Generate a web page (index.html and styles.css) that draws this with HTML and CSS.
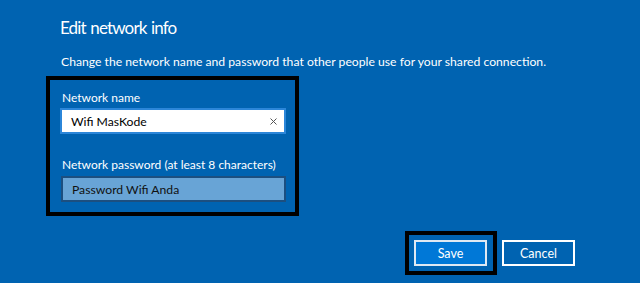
FILE: index.html
```html
<!DOCTYPE html>
<html lang="en">
<head>
<meta charset="utf-8">
<title>Edit network info</title>
<link rel="stylesheet" href="styles.css">
</head>
<body>
<main class="dialog">
  <h1 class="title">Edit network info</h1>
  <p class="desc">Change the network name and password that other people use for your shared connection.</p>
  <section class="fields">
    <div class="label">Network name</div>
    <div class="input input-name">
      <span class="value">Wifi MasKode</span>
      <svg class="clear" width="7" height="7" viewBox="0 0 7 7"><path d="M0.5 0.5L6.5 6.5M6.5 0.5L0.5 6.5" stroke="#555" stroke-width="1" fill="none"/></svg>
    </div>
    <div class="label label-pw">Network password (at least 8 characters)</div>
    <div class="input input-pw">
      <span class="value">Password Wifi Anda</span>
    </div>
  </section>
  <div class="actions">
    <div class="focus-ring"><button class="btn btn-primary">Save</button></div>
    <button class="btn btn-secondary">Cancel</button>
  </div>
</main>
</body>
</html>
```
FILE: styles.css
```css
html, body {
  margin: 0;
  padding: 0;
}
body {
  background: #0063b1;
  width: 640px;
  height: 283px;
  overflow: hidden;
  font-family: "Lato", "Open Sans", sans-serif;
  color: #fff;
}
.dialog {
  padding: 15px 0 0 46px;
  display: flex;
  flex-direction: column;
}
.title {
  margin: 0 0 0 14px;
  font-size: 17px;
  font-weight: 400;
  line-height: 26px;
  letter-spacing: -0.85px;
  word-spacing: 1px;
}
.desc {
  margin: 13px 0 0 15px;
  font-size: 12.2px;
  line-height: 16px;
}
.fields {
  margin-top: 6px;
  width: 253px;
  box-sizing: border-box;
  border: 4px solid #000;
  padding: 10px 9px 10px 10px;
  display: flex;
  flex-direction: column;
}
.label {
  font-size: 12px;
  line-height: 16px;
  margin-left: 2px;
}
.label-pw {
  margin-top: 23px;
}
.input {
  margin-top: 2px;
  height: 26px;
  box-sizing: border-box;
  display: flex;
  align-items: center;
  justify-content: space-between;
  font-size: 12.2px;
  padding: 0 7px 0 9px;
}
.input-name {
  background: #fff;
  border: 2px solid #2b86d9;
  color: #000;
}
.label-pw + .input {
  margin-top: 3px;
}
.input-pw {
  margin-left: 1px;
  background: #68a4d6;
  border: 2px solid #1c4f80;
  color: #111;
}
.actions {
  margin-top: 15px;
  align-self: flex-end;
  margin-right: 65px;
  display: flex;
  align-items: center;
  gap: 5px;
}
.focus-ring {
  border: 4px solid #000;
  padding: 5px 6px 5px 5px;
  display: flex;
}
.btn {
  width: 73px;
  height: 26px;
  box-sizing: border-box;
  border: 2px solid #fff;
  font-family: inherit;
  font-size: 12.5px;
  color: #fff;
  padding: 0;
}
.btn-primary {
  background: #0078d7;
  border-color: #dfe9f3;
}
.btn-secondary {
  background: #0063b1;
}
```
